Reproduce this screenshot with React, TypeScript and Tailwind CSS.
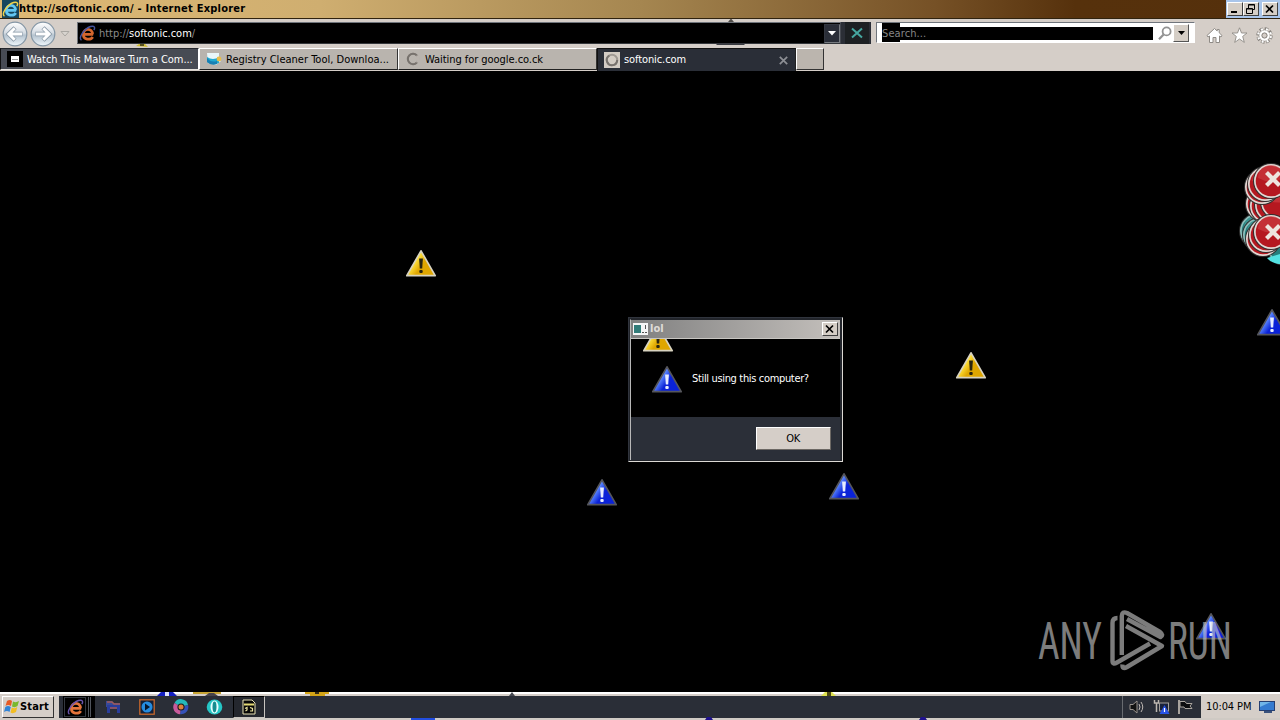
import React from "react";

const BLUE = { from: "#5f8cff", to: "#0a22d8", edge: "#55565c", mark: "#e6ecff" };
const YELLOW = { from: "#ffe23e", to: "#dfa600", edge: "#d8d3c0", mark: "#2a2410" };

const Warning = ({ kind }: { kind: "blue" | "yellow" }) => {
  const c = kind === "blue" ? BLUE : YELLOW;
  const id = "warn-" + kind;
  return (
    <svg className="block" width="32" height="29" viewBox="0 0 32 29">
      <defs>
        <linearGradient id={id} x1="0" y1="0" x2="1" y2="0.6">
          <stop offset="0" stopColor={c.to} />
          <stop offset="0.4" stopColor={c.from} />
          <stop offset="0.65" stopColor={c.to} />
          <stop offset="1" stopColor={c.to} />
        </linearGradient>
      </defs>
      <path d="M16 1.8 L30.2 26.7 H1.8 Z" fill={"url(#" + id + ")"} stroke={c.edge} strokeWidth="1.7" strokeLinejoin="round" />
      <path d="M14.1 9.5 H17.9 L17.2 19.5 H14.8 Z" fill={c.mark} />
      <rect x="14.3" y="21" width="3.4" height="3" rx="1" fill={c.mark} />
    </svg>
  );
};

// icons left behind by the pointer, in desktop coordinates
const floating: { kind: "blue" | "yellow"; pos: string }[] = [
  { kind: "yellow", pos: "left-[405px] top-[249px]" },
  { kind: "yellow", pos: "left-[955px] top-[351px]" },
  { kind: "blue", pos: "left-[586px] top-[478px]" },
  { kind: "blue", pos: "left-[828px] top-[472px]" },
  { kind: "blue", pos: "left-[1256px] top-[308px]" },
  { kind: "blue", pos: "left-[1195px] top-[612px]" },
];

const Explorer = ({ color, ring, size }: { color: string; ring: string; size: number }) => (
  <svg className="block shrink-0" width={size} height={size} viewBox="0 0 18 18">
    <path d="M15 10 H5 M4.6 10 C4.6 2.800 14.2 2.800 14.3 9.9 M4.6 9.8 C4.6 16 12.2 16.400 14.6 12.6" fill="none" stroke={color} strokeWidth="2.9" />
    <path d="M2.6 16.2 C-1 13.5 5.2 4 12.2 1.6 C16.2 .5 17.5 2.4 15.7 5.5" fill="none" stroke={ring} strokeWidth="1.5" />
  </svg>
);

const NavButton = ({ flip }: { flip?: boolean }) => (
  <svg className="block shrink-0" width="26" height="26" viewBox="0 0 26 26">
    <defs>
      <linearGradient id="nav" x1="0" y1="0" x2="0" y2="1">
        <stop offset="0" stopColor="#ffffff" />
        <stop offset="0.45" stopColor="#d5dce3" />
        <stop offset="0.55" stopColor="#b5c3cf" />
        <stop offset="1" stopColor="#eef6fb" />
      </linearGradient>
    </defs>
    <circle cx="13" cy="13" r="11.8" fill="url(#nav)" stroke="#8496a5" strokeWidth="1.2" />
    <g transform={flip ? "matrix(-1 0 0 1 26 0)" : undefined} fill="none">
      <path d="M20.5 13 H7.5 M13 6.8 L6.8 13 L13 19.2" stroke="#8797a5" strokeWidth="4.4" />
      <path d="M20 13 H7.5 M12.7 7.2 L6.9 13 L12.7 18.8" stroke="#ffffff" strokeWidth="3" />
    </g>
  </svg>
);

const Spinner = ({ open }: { open?: boolean }) => (
  <svg className="block shrink-0" width="16" height="16" viewBox="0 0 16 16">
    {!open && <rect width="16" height="16" fill="#d3ccc4" />}
    <circle cx="8" cy="8" r="5.2" fill="none" stroke="#a09a94" strokeWidth="2" />
    <path d={open ? "M11.7 11.7 A5.2 5.2 0 1 1 11.7 4.3" : "M13.2 8 A5.2 5.2 0 1 1 5.4 3.5"} fill="none" stroke="#77726d" strokeWidth="2" />
    {open && <path d="M13 5 V11" stroke="#b9b3ad" strokeWidth="3" />}
  </svg>
);

const WindowButton = ({ children }: { children: React.ReactNode }) => (
  <div className="h-[14px] w-[16px] shrink-0 border border-b-[#404040] border-l-white border-r-[#404040] border-t-white bg-[#d5cec6]">
    <svg className="-ml-px -mt-px block" width="15" height="14" viewBox="0 0 15 14">{children}</svg>
  </div>
);

const TitleBar = () => (
  <div className="flex h-[19px] items-center border-b border-[#30230f] bg-[linear-gradient(90deg,#deb974_0%,#cfae70_25%,#a58650_50%,#765126_73%,#56310c_84%,#55300c_100%)] pl-[2px]">
    <div className="flex h-[18px] w-[17px] items-center justify-center bg-[#17465d]">
      <Explorer color="#62c6f2" ring="#f0d24a" size={17} />
    </div>
    <span className="w-[240px] whitespace-nowrap pt-px text-[11px] font-bold tracking-[0.24px] text-black">http://softonic.com/ - Internet Explorer</span>
    <div className="ml-auto flex h-[18px] w-[54px] items-center bg-[#a9c5ea] pl-px">
      <WindowButton>
        <path d="M4 10 H10" stroke="#000" strokeWidth="2" />
      </WindowButton>
      <WindowButton>
        <path d="M5.5 6 V2.5 H11.5 V7.5 H9.5 M5.5 3 H11.5 M3.5 6.5 H9.5 V11.5 H3.5 Z M3.5 7 H9.5" stroke="#000" fill="none" />
      </WindowButton>
      <div className="w-[3px]" />
      <WindowButton>
        <path d="M4 3.5 L11 10.5 M11 3.5 L4 10.5" stroke="#000" strokeWidth="1.7" />
      </WindowButton>
    </div>
  </div>
);

const ToolBar = () => (
  <div className="flex h-[29px] bg-[#d5cec8] pt-[3px]">
    <div className="flex h-[24px] w-[77px] items-center gap-[2px] pl-[2px]">
      <NavButton />
      <NavButton flip />
      <svg width="14" height="8" viewBox="0 0 14 8">
        <path d="M3 1.5 H11 L7 6 Z" fill="#d8d4cf" stroke="#aaa7a2" />
      </svg>
    </div>
    {/* address */}
    <div className="flex h-[22px] w-[764px] items-center border border-b-[#34373b] border-l-[#70757c] border-r-[#44474f] border-t-[#70757c] bg-black pl-px">
      <Explorer color="#d5662d" ring="#4655a0" size={17} />
      <span className="ml-[3px] whitespace-nowrap pt-[2px] text-[11px] tracking-[-0.04px] text-[#8b8b8b]">
        http://<span className="text-white">softonic.com</span>/
      </span>
      <div className="ml-auto flex h-[19px] w-[16px] items-center justify-center border border-b-[#777b80] border-l-[#333740] border-r-[#777b80] border-t-[#333740] bg-[#2a2e38]">
        <svg width="8" height="5" viewBox="0 0 8 5">
          <path d="M0 0 H8 L4 4.5 Z" fill="#fff" />
        </svg>
      </div>
    </div>
    <div className="flex h-[22px] w-[30px] items-center justify-center border-l-4 border-r-2 border-[#2b2e36] bg-[#1d2023]">
      <svg width="12" height="12" viewBox="0 0 12 12">
        <path d="M1 1.5 L11 10.5 M11 1.5 L1 10.5" stroke="#46a6a0" strokeWidth="2" />
      </svg>
    </div>
    {/* search */}
    <div className="ml-[5px] flex h-[21px] w-[319px] border border-b-white border-l-[#70757c] border-r-white border-t-[#70757c] bg-white pl-[5px]">
      <div className="h-[19px] w-[18px] bg-black">
        <span className="relative z-10 block whitespace-nowrap text-[11px] leading-[22px] tracking-[0.1px] text-[#858585]">Search...</span>
      </div>
      <div className="mt-[4px] h-[13px] w-[253px] bg-black" />
      <svg className="ml-[5px] mt-[3px]" width="14" height="15" viewBox="0 0 14 15">
        <circle cx="8.6" cy="5.4" r="4" fill="#fff" stroke="#929292" strokeWidth="1.8" />
        <path d="M5.6 8.4 L1 13.2" stroke="#929292" strokeWidth="2.2" />
      </svg>
      <div className="ml-px mt-px flex h-[18px] w-[16px] items-center justify-center border border-b-[#555] border-l-white border-r-[#555] border-t-white bg-[#d5cec6]">
        <svg width="7" height="4" viewBox="0 0 7 4">
          <path d="M0 0 H7 L3.5 4 Z" fill="#000" />
        </svg>
      </div>
    </div>
    <div className="ml-[11px] mt-[5px] flex gap-[8px]">
      <svg width="17" height="17" viewBox="0 0 17 17">
        <path d="M8.5 1.5 L1 8.5 L2 10 L3.5 9 V15.5 H7 V10.5 H10 V15.5 H13.5 V9 L15 10 L16 8.5 L13.2 5.8 V2.5 H11.2 V4 Z" fill="#fff" stroke="#8f8b86" />
      </svg>
      <svg width="17" height="17" viewBox="0 0 17 17">
        <path d="M8.5 .8 L10.5 6 H16 L11.7 9.4 L13.3 15.4 L8.5 12 L3.7 15.4 L5.3 9.4 L1 6 H6.5 Z" fill="#fff" stroke="#8f8b86" strokeWidth="0.9" />
      </svg>
      <svg width="17" height="17" viewBox="0 0 17 17">
        <circle cx="8.5" cy="8.5" r="6.6" fill="none" stroke="#85817c" strokeWidth="3.2" strokeDasharray="3.4 1.784" />
        <circle cx="8.5" cy="8.5" r="5.4" fill="none" stroke="#85817c" strokeWidth="1" />
        <circle cx="8.5" cy="8.5" r="6.4" fill="none" stroke="#fff" strokeWidth="2.2" strokeDasharray="1.9 3.127" strokeDashoffset="-.7" />
        <circle cx="8.5" cy="8.5" r="4" fill="none" stroke="#fff" strokeWidth="2.4" />
        <circle cx="8.5" cy="8.5" r="2.6" fill="#d5cec8" stroke="#85817c" strokeWidth="1" />
      </svg>
    </div>
  </div>
);

const Tabs = () => (
  <div className="flex h-[23px] items-start border-b border-[#d5cec8] bg-[#d5cec8] text-[11px]">
    <div className="flex h-[22px] w-[199px] items-center border border-b-[#e8e5df] border-l-[#111] border-r-white border-t-[#22252b] bg-[#474b54] pl-[6px] text-white">
      <svg className="shrink-0" width="16" height="16" viewBox="0 0 16 16">
        <rect width="16" height="16" fill="#000" />
        <rect x="4" y="5" width="8" height="6" fill="#fff" />
        <path d="M5 8.5 H11" stroke="#999" />
      </svg>
      <span className="ml-[4px] whitespace-nowrap pt-[2px] tracking-[-0.04px]">Watch This Malware Turn a Com...</span>
    </div>
    <div className="flex h-[22px] w-[199px] items-center border border-b-[#222] border-l-white border-r-[#333] border-t-white bg-[#b9b4ae] pl-[6px] text-black">
      <svg className="shrink-0" width="16" height="16" viewBox="0 0 16 16">
        <path d="M1 2 H13 V8 L15 10 L10 14 L2 12 Z" fill="#e9f7fa" />
        <path d="M1 6 Q7 10 13 6 V12 Q7 15 1 11 Z" fill="#21a9d2" />
        <path d="M1 7 Q5 12 11 10 V13 Q5 15 1 11 Z" fill="#1780b4" />
        <circle cx="13" cy="8" r="2.4" fill="#e8bd4a" />
      </svg>
      <span className="ml-[4px] whitespace-nowrap pt-[2px] tracking-[0.01px]">Registry Cleaner Tool, Downloa...</span>
    </div>
    <div className="flex h-[22px] w-[199px] items-center border border-b-[#222] border-l-white border-r-[#333] border-t-white bg-[#b9b4ae] pl-[6px] text-black">
      <Spinner open />
      <span className="ml-[4px] whitespace-nowrap pt-[2px] tracking-[-0.05px]">Waiting for google.co.ck</span>
    </div>
    <div className="flex h-[23px] w-[199px] items-center border border-b-0 border-l-[#111] border-r-[#222] border-t-[#111] bg-[#2a2e37] pl-[6px] pr-[7px] text-white">
      <Spinner />
      <span className="ml-[4px] whitespace-nowrap pt-px tracking-[-0.1px]">softonic.com</span>
      <svg className="ml-auto" width="9" height="9" viewBox="0 0 9 9">
        <path d="M.8 .8 L8.2 8.2 M8.2 .8 L.8 8.2" stroke="#8d8f94" strokeWidth="1.7" />
      </svg>
    </div>
    <div className="h-[22px] w-[28px] border border-b-[#333] border-l-white border-r-[#333] border-t-white bg-[#bbb5ae]" />
  </div>
);

const Dialog = () => (
  <div className="absolute left-[628px] top-[317px] flex h-[145px] w-[215px] flex-col border border-b-[#dcd9d4] border-l-[#30343d] border-r-[#dcd9d4] border-t-[#30343d] bg-[#22252b] p-px">
    <div className="flex h-full flex-col border border-b-0 border-l-[#b8b8b8] border-r-[#22252b] border-t-[#22252b]">
      <div className="flex h-[18px] shrink-0 items-center bg-[linear-gradient(90deg,#808080,#c4c0bc)] pl-[2px] pr-[2px]">
        <svg width="15" height="12" viewBox="0 0 15 12">
          <rect width="15" height="12" fill="#f5f5f5" />
          <rect x="1" y="2" width="7" height="8" fill="#327c79" />
          <path d="M12.5 2 V6 M9 9.5 H11 M12 9.5 H14" stroke="#555" strokeWidth="1" />
        </svg>
        <span className="ml-[2px] pt-px text-[11px] font-bold text-[#dedbd7]">lol</span>
        <div className="ml-auto">
          <WindowButton>
            <path d="M4 3.5 L11 10.5 M11 3.5 L4 10.5" stroke="#000" strokeWidth="1.7" />
          </WindowButton>
        </div>
      </div>
      <div className="relative h-[79px] shrink-0 overflow-hidden border-t border-[#c8c6c2] bg-black">
        <div className="absolute -top-[15px] left-[11px]">
          <Warning kind="yellow" />
        </div>
        <div className="flex items-center pl-[20px] pt-[26px]">
          <Warning kind="blue" />
          <span className="ml-[9px] whitespace-nowrap text-[11px] tracking-[-0.34px] text-white">Still using this computer?</span>
        </div>
      </div>
      <div className="flex grow items-start justify-end bg-[#2b2f38] pr-[9px] pt-[10px]">
        <div className="flex h-[23px] w-[75px] items-center justify-center border border-b-[#6c6864] border-l-white border-r-[#6c6864] border-t-white bg-[#d5cec8] pr-px pt-px text-[11px] tracking-[-0.3px] text-black">OK</div>
      </div>
    </div>
  </div>
);

const errors = [
  { x: 21, y: 76, teal: true },
  { x: 24, y: 80, teal: true },
  { x: 49, y: 93, teal: true },
  { x: 27, y: 49 },
  { x: 31, y: 51 },
  { x: 36, y: 50 },
  { x: 42, y: 47 },
  { x: 26, y: 32 },
  { x: 29, y: 29 },
  { x: 35, y: 26 },
  { x: 27, y: 84 },
  { x: 30, y: 80 },
  { x: 35, y: 77 },
];

const ErrorStack = () => (
  <svg className="absolute right-0 top-[155px]" width="60" height="120" viewBox="0 0 60 120">
    {errors.map((e, i) => (
      <g key={i} transform={"translate(" + (e.x + 16) + " " + e.y + ")"}>
        <circle r="18" fill="#303030" />
        <circle r="17" fill={e.teal ? "#8fc0bd" : "#e2d7d3"} />
        <circle r="15.3" fill={e.teal ? "#267f7d" : "#b51820"} />
        <path d="M-13 -3 A13 13 0 0 1 13 -3 Q0 4 -13 -3" fill={e.teal ? "#4da8a5" : "#cf4549"} opacity=".55" />
      </g>
    ))}
    <path d="M47 103 Q52 109 60 109 V99 Z" fill="#53e2e2" />
    {[[53, 24], [53, 77]].map(([x, y]) => (
      <path key={y} transform={"translate(" + x + " " + y + ")"} d="M-6.500 -6.500 L6.500 6.500 M6.500 -6.500 L-6.500 6.500" stroke="#eee5df" strokeWidth="4.2" />
    ))}
  </svg>
);

const Watermark = () => (
  <svg className="absolute left-[1030px] top-[605px] opacity-60" width="230" height="72" viewBox="0 0 230 72">
    <g fill="#cfcfcf" fontFamily="Roboto, sans-serif" fontSize="52">
      <text x="8" y="54" textLength="64" lengthAdjust="spacingAndGlyphs">ANY</text>
      <text x="138" y="54" textLength="64" lengthAdjust="spacingAndGlyphs">RUN</text>
    </g>
    <g fill="none" stroke="#cfcfcf" strokeWidth="4.4" strokeLinejoin="round">
      <path d="M87.500 13 Q82.500 13 82.500 18 V56 Q82.500 60 87 57.500 L120 38.500" />
      <path d="M91.800 50 V11 Q92 6 97 8 L130 27 Q134 30 130.500 32 L97 14" />
      <path d="M96 21 L132 41 L97 62 Q92 65 92.500 59.500" />
    </g>
  </svg>
);

const TaskBar = () => (
  <div className="flex h-[28px] shrink-0 flex-col border-b-2 border-t-2 border-b-[#cfcac4] border-t-white bg-[#d5cec8]">
    <div className="mt-[2px] flex h-[22px]">
      <div className="ml-[2px] flex h-[22px] w-[52px] items-center border border-b-[#333] border-l-white border-r-[#333] border-t-white bg-[#d5cec8] pl-px">
        <svg className="shrink-0" width="16" height="16" viewBox="0 0 16 16">
          <path d="M3 2 Q6 0 8 2 L7 7 Q4 5 1.5 7 Z" fill="#e65a24" />
          <path d="M9 2.5 Q12 4 15 2 L13.5 7 Q11 9 8 7.5 Z" fill="#79b82d" />
          <path d="M1.3 8 Q4 6 6.8 8 L5.5 13 Q3 11 0 13 Z" fill="#3184d6" />
          <path d="M7.8 8.5 Q11 10 13.3 8 L12 13 Q9 15 6.5 13.5 Z" fill="#f2bd22" />
        </svg>
        <span className="pt-px text-[11px] font-bold tracking-[0.15px] text-black">Start</span>
      </div>
      <div className="ml-[5px] flex w-[1063px] items-center bg-[#2a2e37]">
        <div className="ml-[4px] flex h-[22px] w-[32px] items-center bg-black">
          <div className="ml-px flex h-[20px] w-[22px] items-center justify-center border border-[#34383f]">
            <Explorer color="#e4743b" ring="#6b54ac" size={17} />
          </div>
          <div className="ml-[2px] h-[20px] w-[3px] border-x border-[#50545c]" />
        </div>
        <svg className="ml-[10px]" width="17" height="16" viewBox="0 0 17 16">
          <path d="M1 2 H7 L9 4 H15 V8 H1 Z" fill="#384a97" />
          <path d="M2 6 H15 V14 H12 V10 H5 V14 H2 Z" fill="#293d9c" />
          <path d="M2 3 H7 L9 5 H15 M5 9 H12" fill="none" stroke="#a35a55" strokeWidth="1.3" />
        </svg>
        <svg className="ml-[17px]" width="16" height="16" viewBox="0 0 16 16">
          <rect x=".8" y=".8" width="14.4" height="14.4" fill="#122039" stroke="#c7682c" strokeWidth="1.3" />
          <circle cx="8" cy="8" r="5.5" fill="#258ce0" />
          <path d="M6 4.5 L11 8 L6 11.5 Z" fill="#07172d" />
        </svg>
        <svg className="ml-[18px]" width="16" height="16" viewBox="0 0 16 16">
          <path d="M8 8 L1.5 4 A7.2 7.2 0 0 1 15 6 Z" fill="#25b9ba" />
          <path d="M8 8 L15 6 A7.2 7.2 0 0 1 7 15.2 Z" fill="#3552b8" />
          <path d="M8 8 L7 15.2 A7.2 7.2 0 0 1 1.5 4 Z" fill="#c85a9b" />
          <circle cx="8" cy="8" r="3.6" fill="#1f1a1a" />
          <circle cx="8" cy="8" r="2.5" fill="#dd813c" />
        </svg>
        <svg className="ml-[17px]" width="17" height="16" viewBox="0 0 17 16">
          <ellipse cx="8.5" cy="8" rx="7.8" ry="7.6" fill="#25c6c6" />
          <ellipse cx="8.5" cy="8" rx="4" ry="6.4" fill="#e7ffff" />
          <ellipse cx="8.5" cy="8" rx="2" ry="5.4" fill="#168d90" />
        </svg>
        <div className="ml-[10px] flex h-[22px] w-[32px] items-center justify-center border border-b-[#c8c5c0] border-l-black border-r-[#c8c5c0] border-t-black bg-[#24272e]">
          <svg width="14" height="16" viewBox="0 0 14 16">
            <path d="M1 1 H10 L13 4 V15 H1 Z" fill="#060606" stroke="#e8e2b5" />
            <path d="M2 5.5 H12" stroke="#e5db74" strokeWidth="2" />
            <path d="M3 9.500 L5 8.500 V11 L3.500 12 M8 8.500 L10.500 9.500 V12 H8" fill="none" stroke="#eee6a0" strokeWidth="1.2" />
          </svg>
        </div>
      </div>
      <div className="flex grow items-center border-l border-[#686b70] bg-[#d5cec8]">
        <div className="flex h-full w-[78px] items-center bg-[#2a2e37] pl-[6px]">
          <svg width="17" height="16" viewBox="0 0 17 16">
            <path d="M1 5.5 H4 L8 2 V14 L4 10.5 H1 Z" fill="#111" stroke="#99938d" />
            <path d="M10 5 Q12 8 10 11 M12 3 Q15.5 8 12 13" fill="none" stroke="#beb8b3" />
          </svg>
          <svg className="ml-[7px]" width="18" height="16" viewBox="0 0 18 16">
            <path d="M1.5 1 V4 H5.5 V1 M3.5 4 V13" fill="none" stroke="#bdb7b0" strokeWidth="1.5" />
            <rect x="6.5" y="4" width="9" height="8" fill="#18223c" stroke="#a4a09b" />
            <path d="M11.5 6 L16.5 15 H6.5 Z" fill="#2853e5" />
            <path d="M11.5 9 V13" stroke="#fff" strokeWidth="1.2" />
          </svg>
          <svg className="ml-[6px]" width="17" height="16" viewBox="0 0 17 16">
            <path d="M2 1 V15" stroke="#a9a49e" strokeWidth="2" />
            <path d="M3 2.5 H8 L9.5 4.5 H15 L13 7 L15 9.5 H8 L7 8 H3 Z" fill="#0c0d0f" stroke="#a9a49e" />
          </svg>
        </div>
        <span className="ml-[5px] w-[49px] whitespace-nowrap pt-px text-[11px] tracking-[-0.1px] text-black">10:04 PM</span>
        <svg className="ml-[4px]" width="17" height="14" viewBox="0 0 17 14">
          <rect x=".5" y="1.5" width="15" height="9" fill="#347bd0" stroke="#243f73" />
          <path d="M1 2 H12 Q7 4 1 7 Z" fill="#70b5e8" />
          <path d="M5 12 H13" stroke="#39517c" strokeWidth="2" />
        </svg>
      </div>
    </div>
  </div>
);

// bits of icons that show through the edges of the bars
const scraps = (
  <>
    <svg className="absolute left-0 top-[692px]" width="900" height="4" viewBox="0 0 900 4">
      <path d="M157 4 L161 0 H173 L177 4 Z" fill="#1420c0" />
      <path d="M165 0 H169 V4 H165 Z" fill="#dfe4ff" />
      <path d="M193 0 H221 V2 H193 Z" fill="#c7a433" />
      <path d="M205 4 L209 1 H214 L218 4 Z" fill="#47434a" />
      <path d="M305 0 H329 V2 H325 V4 H310 V2 H305 Z" fill="#d3a417" />
      <path d="M315 0 H319 V2 H315 Z" fill="#332b13" />
      <path d="M509 4 L512 0 L515 4 Z" fill="#44464e" />
      <path d="M821 4 L825 0 H832 L836 4 Z" fill="#dde050" />
      <path d="M827 0 H831 V4 H827 Z" fill="#4a4714" />
    </svg>
    <svg className="absolute left-0 top-[717px]" width="940" height="3" viewBox="0 0 940 3">
      <path d="M411 1 H435 V3 H411 Z" fill="#224ee0" />
      <path d="M705 3 L707 0 H711 L713 3 Z" fill="#20128d" />
      <path d="M919 3 L921 0 H925 L927 3 Z" fill="#20128d" />
    </svg>
    <svg className="absolute left-[130px] top-[18px]" width="620" height="30" viewBox="0 0 620 30">
      <path d="M598 4 L601 .5 L604 4 Z" fill="#504d49" />
      <path d="M585 25 H616 L614 27 H587 Z" fill="#383a40" />
      <path d="M6 28 L9 26 H15 L18 29 Z" fill="#d0bc35" />
      <path d="M10 26 H14 V28 H10 Z" fill="#57501c" />
    </svg>
  </>
);

const App: React.FC = () => {
  return (
    <div className="relative flex h-[720px] w-[1280px] flex-col overflow-hidden bg-black font-['DejaVu_Sans_Condensed','DejaVu_Sans',sans-serif] [font-stretch:condensed]">
      <TitleBar />
      <ToolBar />
      <Tabs />
      <main className="grow bg-black" />
      <TaskBar />
      {floating.map((f) => (
        <div key={f.pos} className={"absolute " + f.pos}>
          <Warning kind={f.kind} />
        </div>
      ))}
      <ErrorStack />
      <Watermark />
      <Dialog />
      {scraps}
    </div>
  );
};

export default App;
